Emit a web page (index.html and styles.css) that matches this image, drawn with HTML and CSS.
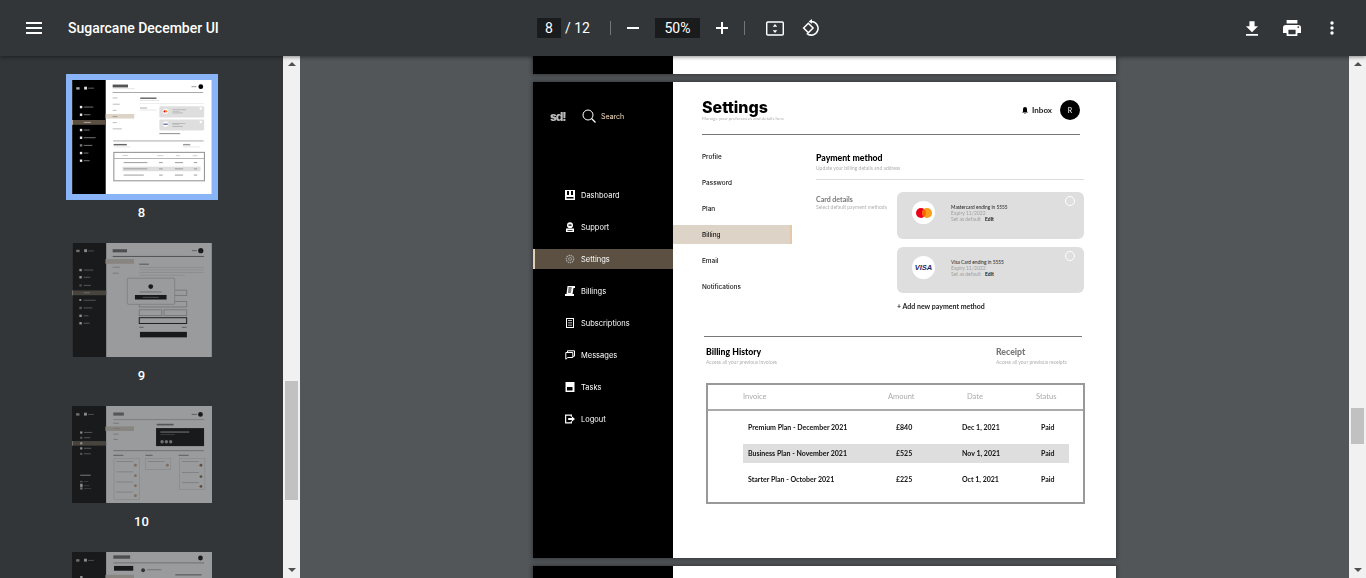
FILE: index.html
```html
<!DOCTYPE html>
<html lang="en-gb">
  <head>
    <title>Sugarcane December UI</title>
    <meta name="viewport" content="width=device-width, initial-scale=1">
    <link rel="stylesheet" href="styles.css">
  </head>
  <body>
    <header class="toolbar">
      <div class="toolbar-left">
        <svg class="menu-icon" width="16" height="12" viewBox="0 0 16 12"><path fill="#fff" d="M0 0h16v2H0zM0 5h16v2H0zM0 10h16v2H0z"/></svg>
        <span class="doc-title">Sugarcane December UI</span>
      </div>
      <div class="toolbar-mid">
        <span class="num-box page-box">8</span>
        <span class="page-total">/ 12</span>
        <span class="divider first"></span>
        <svg class="zoom-out" width="12" height="2" viewBox="0 0 12 2"><path fill="#fff" d="M0 0h12v2H0z"/></svg>
        <span class="num-box zoom-box">50%</span>
        <svg class="zoom-in" width="12" height="12" viewBox="0 0 12 12"><path fill="#fff" d="M5 0h2v5h5v2H7v5H5V7H0V5h5z"/></svg>
        <span class="divider second"></span>
        <svg class="fit-icon" width="18" height="15" viewBox="0 0 20 16"><path fill="#fff" d="M2 0h16a2 2 0 0 1 2 2v12a2 2 0 0 1-2 2H2a2 2 0 0 1-2-2V2a2 2 0 0 1 2-2zm0 1.600a.4.4 0 0 0-.4.4v12c0 .2.2.4.4.4h16c.2 0 .4-.2.4-.4V2a.4.4 0 0 0-.4-.4zM10 3l2.500 3h-5zm0 10l-2.500-3h5z"/></svg>
        <svg class="rotate-icon" width="18" height="18" viewBox="0 0 19 19"><path fill="none" stroke="#fff" stroke-width="1.600" d="M1.700 9.500l5-5 5 5-5 5z"/><path fill="none" stroke="#fff" stroke-width="1.600" d="M8 2.600h2a7.200 7.200 0 1 1-5 12.600"/><path fill="#fff" d="M10.500 0v5L7.200 2.600z"/></svg>
      </div>
      <div class="toolbar-right">
        <svg width="12" height="15" viewBox="0 0 14 17"><path fill="#fff" d="M14 6h-4V0H4v6H0l7 7zM0 15v2h14v-2z"/></svg>
        <svg width="18" height="16" viewBox="0 0 18 16"><path fill="#fff" d="M15.300 5H2.700A2.700 2.700 0 0 0 0 7.700V13h3.600v3h10.800v-3H18V7.700A2.700 2.700 0 0 0 15.300 5zM12.600 14.200H5.400V9.700h7.200zM15.300 8a.9.9 0 1 1 0-1.800.9.9 0 0 1 0 1.800zM14.400 0H3.600v3.600h10.800z"/></svg>
        <svg class="kebab" width="4" height="14" viewBox="0 0 4 14"><circle fill="#fff" cx="2" cy="2" r="1.700"/><circle fill="#fff" cx="2" cy="7" r="1.700"/><circle fill="#fff" cx="2" cy="12" r="1.700"/></svg>
      </div>
    </header>

    <div class="viewer">
      <aside class="thumbs">
        <div class="thumb-list">
          <div class="thumb selected">
            <svg class="thumb-img" width="140" height="114" viewBox="533 82 583 476">
              <rect x="533" y="82" width="583" height="476" fill="#fff"/>
              <rect x="533" y="82" width="140" height="476" fill="#000"/>
              <rect x="550" y="112" width="14" height="10" fill="#aaa"/><rect x="583" y="110" width="12" height="12" fill="#ddd"/><rect x="600" y="114" width="24" height="4" fill="#666"/>
              <g fill="#eee"><rect x="565" y="190" width="10" height="10"/><rect x="565" y="222" width="10" height="10"/><rect x="565" y="286" width="10" height="10"/><rect x="565" y="318" width="10" height="10"/><rect x="565" y="350" width="10" height="10" opacity=".5"/><rect x="565" y="382" width="10" height="10"/><rect x="565" y="414" width="10" height="10"/></g>
              <g fill="#777"><rect x="581" y="193" width="40" height="4"/><rect x="581" y="225" width="28" height="4"/><rect x="581" y="289" width="25" height="4"/><rect x="581" y="321" width="50" height="4"/><rect x="581" y="353" width="36" height="4"/><rect x="581" y="385" width="20" height="4"/><rect x="581" y="417" width="25" height="4"/></g>
              <rect x="533" y="249" width="140" height="20" fill="#5c5042"/><rect x="533" y="249" width="3" height="20" fill="#dfcdb8"/><rect x="581" y="257" width="30" height="4" fill="#aaa"/>
              <rect x="702" y="101" width="64" height="12" fill="#555"/><rect x="702" y="117" width="92" height="3" fill="#ddd"/>
              <rect x="1031" y="108" width="21" height="4" fill="#999"/><circle cx="1070" cy="110" r="10" fill="#000"/>
              <rect x="702" y="133" width="378" height="3" fill="#888"/>
              <g fill="#bbb"><rect x="702" y="155" width="20" height="4"/><rect x="702" y="181" width="30" height="4"/><rect x="702" y="207" width="16" height="4"/><rect x="702" y="258" width="18" height="4"/><rect x="702" y="284" width="38" height="4"/></g>
              <rect x="673" y="224" width="119" height="19" fill="#ded3c7"/><rect x="702" y="233" width="20" height="4" fill="#999"/>
              <rect x="817" y="155" width="68" height="6" fill="#666"/><rect x="817" y="166" width="80" height="3" fill="#ddd"/><rect x="816" y="178" width="268" height="2" fill="#ddd"/>
              <rect x="816" y="197" width="30" height="4" fill="#aaa"/><rect x="816" y="206" width="70" height="3" fill="#ddd"/>
              <rect x="897" y="192" width="187" height="47" rx="6" fill="#dedede"/><rect x="897" y="247" width="187" height="46" rx="6" fill="#dedede"/>
              <circle cx="923" cy="213" r="11" fill="#fff"/><circle cx="920" cy="213" r="5" fill="#eb001b"/><circle cx="926" cy="213" r="5" fill="#f79e1b"/>
              <circle cx="923" cy="266" r="11" fill="#fff"/><rect x="914" y="264" width="18" height="5" fill="#4a5a9c"/>
              <g fill="#aaa"><rect x="951" y="205" width="58" height="3"/><rect x="951" y="212" width="30" height="2"/><rect x="951" y="218" width="44" height="3"/><rect x="951" y="262" width="54" height="3"/><rect x="951" y="268" width="30" height="2"/><rect x="951" y="274" width="44" height="3"/></g>
              <circle cx="1070" cy="201" r="5" fill="#fff"/><circle cx="1070" cy="257" r="5" fill="#fff"/>
              <rect x="897" y="304" width="87" height="4" fill="#888"/>
              <rect x="704" y="335" width="378" height="3" fill="#888"/>
              <rect x="706" y="349" width="55" height="6" fill="#666"/><rect x="706" y="360" width="70" height="3" fill="#ddd"/><rect x="996" y="349" width="30" height="6" fill="#999"/><rect x="996" y="360" width="70" height="3" fill="#ddd"/>
              <rect x="707" y="384" width="378" height="119" fill="none" stroke="#888" stroke-width="4"/><rect x="707" y="408" width="378" height="3" fill="#999"/>
              <g fill="#ccc"><rect x="743" y="395" width="24" height="4"/><rect x="888" y="396" width="26" height="4"/><rect x="967" y="396" width="16" height="4"/><rect x="1036" y="396" width="20" height="4"/></g>
              <rect x="743" y="444" width="326" height="19" fill="#dedede"/>
              <g fill="#999"><rect x="748" y="425" width="99" height="4"/><rect x="896" y="425" width="15" height="4"/><rect x="962" y="425" width="34" height="4"/><rect x="1041" y="425" width="14" height="4"/><rect x="748" y="451" width="99" height="4"/><rect x="896" y="451" width="15" height="4"/><rect x="962" y="451" width="34" height="4"/><rect x="1041" y="451" width="14" height="4"/><rect x="748" y="477" width="84" height="4"/><rect x="896" y="477" width="15" height="4"/><rect x="962" y="477" width="34" height="4"/><rect x="1041" y="477" width="14" height="4"/></g>
            </svg>
          </div>
          <span class="thumb-num num-8">8</span>

          <div class="thumb dim">
            <svg class="thumb-img" width="140" height="114" viewBox="0 0 583 476">
              <rect width="583" height="476" fill="#fff"/>
              <rect width="142" height="476" fill="#000"/>
              <rect x="17" y="28" width="14" height="10" fill="#aaa"/><rect x="50" y="26" width="12" height="12" fill="#ddd"/><rect x="67" y="31" width="24" height="4" fill="#666"/>
              <g fill="#eee"><rect x="30" y="108" width="10" height="10"/><rect x="30" y="138" width="10" height="10"/><rect x="30" y="172" width="10" height="10" opacity=".4"/><rect x="30" y="234" width="8" height="8"/><rect x="30" y="266" width="10" height="10" opacity=".5"/><rect x="30" y="299" width="10" height="10"/><rect x="30" y="330" width="10" height="10"/></g>
              <g fill="#777"><rect x="48" y="111" width="40" height="4"/><rect x="48" y="141" width="28" height="4"/><rect x="48" y="175" width="30" height="4"/><rect x="48" y="237" width="50" height="4"/><rect x="48" y="269" width="36" height="4"/><rect x="48" y="302" width="20" height="4"/><rect x="48" y="333" width="25" height="4"/></g>
              <rect y="198" width="142" height="20" fill="#5c5042"/><rect y="198" width="3" height="20" fill="#dfcdb8"/><rect x="48" y="206" width="26" height="4" fill="#aaa"/>
              <rect x="169" y="26" width="60" height="13" fill="#666"/><rect x="500" y="30" width="20" height="4" fill="#888"/><circle cx="537" cy="32" r="11" fill="#000"/>
              <rect x="169" y="54" width="381" height="4" fill="#666"/>
              <rect x="139" y="67" width="119" height="20" fill="#ded3c7"/>
              <rect x="169" y="99" width="30" height="4" fill="#bbb"/><rect x="169" y="124" width="25" height="4" fill="#bbb"/>
              <rect x="280" y="86" width="40" height="5" fill="#888"/>
              <g fill="#ddd"><rect x="280" y="100" width="270" height="3"/><rect x="280" y="111" width="270" height="3"/><rect x="280" y="122" width="270" height="3"/><rect x="280" y="133" width="190" height="3"/></g>
              <g fill="none" stroke="#bbb" stroke-width="4"><rect x="280" y="197" width="198" height="22"/><rect x="280" y="244" width="198" height="23"/><rect x="280" y="279" width="94" height="24"/><rect x="383" y="279" width="95" height="24"/></g>
              <rect x="280" y="312" width="198" height="24" fill="none" stroke="#000" stroke-width="4"/>
              <rect x="280" y="350" width="18" height="4" fill="#888"/><rect x="458" y="350" width="20" height="4" fill="#888"/>
              <rect x="283" y="371" width="196" height="23" fill="#000"/>
              <rect x="230" y="147" width="198" height="109" rx="3" fill="#fff" stroke="#bbb" stroke-width="3"/>
              <circle cx="328" cy="182" r="10" fill="#000"/><rect x="282" y="203" width="92" height="3" fill="#888"/>
              <rect x="262" y="217" width="132" height="19" fill="#000"/><rect x="295" y="225" width="66" height="3" fill="#888"/>
            </svg>
          </div>
          <span class="thumb-num num-9">9</span>

          <div class="thumb dim">
            <svg class="thumb-img" width="140" height="97" viewBox="0 0 583 404">
              <rect width="583" height="404" fill="#fff"/>
              <rect width="142" height="404" fill="#000"/>
              <rect x="17" y="30" width="14" height="10" fill="#aaa"/><rect x="50" y="28" width="12" height="12" fill="#ddd"/><rect x="67" y="33" width="24" height="4" fill="#666"/>
              <g fill="#eee"><rect x="34" y="106" width="9" height="9"/><rect x="34" y="128" width="9" height="9" opacity=".5"/><rect x="34" y="172" width="9" height="9"/><rect x="34" y="195" width="9" height="9" opacity=".5"/></g>
              <g fill="#777"><rect x="50" y="108" width="34" height="4"/><rect x="50" y="130" width="26" height="4"/><rect x="50" y="174" width="30" height="4"/><rect x="50" y="197" width="28" height="4"/></g>
              <rect y="146" width="142" height="19" fill="#5c5042"/><rect y="146" width="3" height="19" fill="#dfcdb8"/><rect x="34" y="151" width="9" height="9" fill="#eee"/>
              <rect x="34" y="286" width="44" height="5" fill="#999"/>
              <rect x="34" y="312" width="10" height="6" fill="#777"/><rect x="34" y="324" width="10" height="13" fill="#eee"/><rect x="34" y="339" width="10" height="9" fill="#aaa"/>
              <g fill="#555"><rect x="50" y="313" width="18" height="3"/><rect x="50" y="329" width="22" height="3"/><rect x="50" y="342" width="30" height="3"/></g>
              <rect x="172" y="27" width="44" height="13" fill="#777"/><rect x="498" y="33" width="22" height="4" fill="#888"/><circle cx="535" cy="35" r="10" fill="#000"/>
              <rect x="172" y="54" width="378" height="5" fill="#ccc"/>
              <rect x="139" y="85" width="119" height="19" fill="#ded3c7"/>
              <g fill="#bbb"><rect x="172" y="70" width="24" height="4"/><rect x="172" y="92" width="28" height="4"/><rect x="172" y="115" width="22" height="4"/><rect x="172" y="137" width="18" height="4"/></g>
              <rect x="353" y="74" width="70" height="7" fill="#777"/>
              <rect x="350" y="92" width="200" height="75" fill="#000"/>
              <rect x="368" y="106" width="120" height="5" fill="#999"/><rect x="368" y="118" width="60" height="3" fill="#555"/>
              <circle cx="375" cy="149" r="7" fill="#aaa"/><circle cx="393" cy="149" r="7" fill="#aaa"/><circle cx="411" cy="149" r="7" fill="#aaa"/>
              <rect x="172" y="185" width="378" height="3" fill="#888"/>
              <rect x="172" y="203" width="42" height="5" fill="#999"/><rect x="306" y="203" width="30" height="5" fill="#999"/><rect x="444" y="203" width="42" height="5" fill="#999"/>
              <g fill="#fff" stroke="#ddd" stroke-width="3"><rect x="175" y="218" width="105" height="171"/><rect x="306" y="218" width="105" height="46"/><rect x="448" y="218" width="105" height="129"/></g>
              <g fill="#c9a98a"><circle cx="264" cy="247" r="6"/><circle cx="264" cy="290" r="6"/><circle cx="264" cy="332" r="6"/><circle cx="264" cy="374" r="6"/><circle cx="397" cy="247" r="6"/></g>
              <g fill="#8a6a4a"><circle cx="537" cy="247" r="6"/><circle cx="537" cy="294" r="6"/><circle cx="537" cy="335" r="6"/></g>
              <g fill="#bbb"><rect x="185" y="230" width="70" height="3"/><rect x="185" y="273" width="70" height="3"/><rect x="185" y="315" width="70" height="3"/><rect x="185" y="357" width="70" height="3"/><rect x="316" y="230" width="70" height="3"/><rect x="458" y="230" width="70" height="3"/><rect x="458" y="275" width="70" height="3"/><rect x="458" y="318" width="70" height="3"/></g>
            </svg>
          </div>
          <span class="thumb-num num-10">10</span>

          <div class="thumb dim">
            <svg class="thumb-img" width="140" height="97" viewBox="0 0 583 404">
              <rect width="583" height="404" fill="#fff"/>
              <rect width="142" height="404" fill="#000"/>
              <rect x="17" y="30" width="14" height="10" fill="#aaa"/><rect x="50" y="28" width="12" height="12" fill="#ddd"/><rect x="67" y="33" width="24" height="4" fill="#666"/>
              <rect x="34" y="100" width="10" height="10" fill="#eee"/>
              <rect x="172" y="14" width="70" height="14" fill="#666"/><circle cx="535" cy="25" r="10" fill="#000"/>
              <rect x="172" y="44" width="378" height="3" fill="#888"/>
              <rect x="175" y="58" width="80" height="20" fill="#000"/>
              <rect x="139" y="95" width="119" height="16" fill="#ded3c7"/>
              <circle cx="296" cy="76" r="8" fill="#333"/><rect x="312" y="72" width="60" height="4" fill="#aaa"/>
              <rect x="430" y="92" width="110" height="6" fill="#999"/>
            </svg>
          </div>
        </div>
        <div class="scrollbar">
          <span class="arrow up"></span>
          <span class="scroll-thumb left-thumb"></span>
          <span class="arrow down"></span>
        </div>
      </aside>

      <main class="document">
        <div class="pages">
          <section class="pdf-page prev-page">
            <div class="side-strip"></div>
          </section>

          <section class="pdf-page current-page">
            <nav class="side">
              <div class="brand">
                <span class="logo">sd!</span>
                <svg class="search-icon" width="14" height="14" viewBox="0 0 14 14"><circle cx="6" cy="6" r="5" fill="none" stroke="#fff"/><path stroke="#fff" stroke-width="1.200" d="M9.500 9.500l4 4"/></svg>
                <span class="search-text">Search</span>
              </div>
              <ul class="nav">
                <li class="nav-item">
                  <svg width="10" height="10" viewBox="0 0 10 10"><path fill="#fff" d="M0 0h10v10H0z"/><path fill="#000" d="M2 1h2v4H2zM6 1h2v4H6zM1.500 7h7v1.500h-7z"/></svg>
                  Dashboard
                </li>
                <li class="nav-item">
                  <svg width="10" height="10" viewBox="0 0 10 10"><circle cx="5" cy="3.200" r="3" fill="#fff"/><path fill="#fff" d="M1 6.500h8V10H1z"/><path fill="#000" d="M3.500 2.500h3v1.200h-3zM2.500 8h5v.8h-5z"/></svg>
                  Support
                </li>
                <li class="nav-item active">
                  <svg width="10" height="10" viewBox="0 0 10 10"><circle cx="5" cy="5" r="3.700" fill="none" stroke="#aaa" stroke-width="1.200" stroke-dasharray="1.500 .7"/><circle cx="5" cy="5" r="1.500" fill="none" stroke="#aaa" stroke-width=".8"/></svg>
                  Settings
                </li>
                <li class="nav-item">
                  <svg width="10" height="10" viewBox="0 0 10 10"><path fill="#fff" d="M2.500 0H10v2H8.500l-1 6H9v2H0V8h1.500z"/><path fill="#000" d="M3.500 1.500h3.200v1H3.500zM3.200 3.500h3.200v1H3.200zM3 5.500h3v1H3z"/></svg>
                  Billings
                </li>
                <li class="nav-item">
                  <svg width="10" height="10" viewBox="0 0 10 10"><path fill="#fff" d="M1 0h8v10H1z"/><path fill="#000" d="M2 1h6v8H2z"/><path fill="#fff" d="M3 2.200h4V3H3zM3 4.500h4v.8H3zM3 6.800h4v.8H3z"/></svg>
                  Subscriptions
                </li>
                <li class="nav-item">
                  <svg width="10" height="10" viewBox="0 0 10 10"><path fill="none" stroke="#fff" d="M2.500 2V.8h7v5.400H8"/><path fill="none" stroke="#fff" d="M.8 2.500h7v5h-5L.8 9.200z"/></svg>
                  Messages
                </li>
                <li class="nav-item">
                  <svg width="10" height="10" viewBox="0 0 10 10"><path fill="#fff" d="M.5 0h9v10h-9z"/><path fill="#000" d="M2 5h5.500v3.500H2z"/></svg>
                  Tasks
                </li>
                <li class="nav-item">
                  <svg width="10" height="10" viewBox="0 0 11 10"><path fill="none" stroke="#fff" stroke-width="1.300" d="M7 2.500V.7H.7v8.600H7V7.500"/><path fill="#fff" d="M3.500 4h4V2l3.500 3-3.500 3V6h-4z"/></svg>
                  Logout
                </li>
              </ul>
            </nav>

            <div class="content">
              <div class="head">
                <div>
                  <h1 class="title">Settings</h1>
                  <p class="hint">Manage your preferences and details here</p>
                </div>
                <div class="inbox">
                  <svg width="6" height="7" viewBox="0 0 6 7"><path fill="#000" d="M3 0a2 2 0 0 1 2 2v2.500l1 1H0l1-1V2a2 2 0 0 1 2-2zM2.200 6h1.600L3 7z"/></svg>
                  <span class="inbox-text">Inbox</span>
                  <span class="avatar">R</span>
                </div>
              </div>

              <div class="settings-body">
                <ul class="tabs">
                  <li class="tab">Profile</li>
                  <li class="tab">Password</li>
                  <li class="tab">Plan</li>
                  <li class="tab active">Billing</li>
                  <li class="tab">Email</li>
                  <li class="tab">Notifications</li>
                </ul>

                <div class="payment">
                  <div class="payment-head">
                    <h2 class="section-title">Payment method</h2>
                    <p class="hint wide">Update your billing details and address</p>
                  </div>
                  <div class="card-grid">
                    <div>
                      <h3 class="card-label">Card details</h3>
                      <p class="hint wide">Select default payment methods</p>
                    </div>
                    <div class="card-list">
                      <div class="card">
                        <span class="card-logo">
                          <svg width="16" height="10" viewBox="0 0 16 10"><circle cx="5" cy="5" r="5" fill="#eb001b"/><circle cx="11" cy="5" r="5" fill="#f79e1b"/><path fill="#ff5f00" d="M8 1.100a5 5 0 0 1 0 7.800 5 5 0 0 1 0-7.800z"/></svg>
                        </span>
                        <div class="card-info">
                          <p class="card-name">Mastercard ending in 5555</p>
                          <p class="card-sub">Expiry 11/2022</p>
                          <p class="card-sub">Set as default <b class="edit">Edit</b></p>
                        </div>
                        <span class="radio"></span>
                      </div>
                      <div class="card">
                        <span class="card-logo"><span class="visa">VISA</span></span>
                        <div class="card-info">
                          <p class="card-name">Visa Card ending in 5555</p>
                          <p class="card-sub">Expiry 11/2022</p>
                          <p class="card-sub">Set as default <b class="edit">Edit</b></p>
                        </div>
                        <span class="radio"></span>
                      </div>
                    </div>
                  </div>
                  <p class="add-card">+ Add new payment method</p>
                </div>
              </div>

              <div class="history">
                <div class="history-head">
                  <div>
                    <h2 class="section-title">Billing History</h2>
                    <p class="hint wide">Access all your previous invoices</p>
                  </div>
                  <div class="receipt">
                    <h2 class="section-title muted">Receipt</h2>
                    <p class="hint wide">Access all your previous receipts</p>
                  </div>
                </div>

                <div class="bill-table">
                  <div class="bill-head">
                    <span>Invoice</span>
                    <span>Amount</span>
                    <span>Date</span>
                    <span>Status</span>
                  </div>
                  <div class="bill-rows">
                    <div class="bill-row">
                      <span>Premium Plan - December 2021</span><span>£840</span><span>Dec 1, 2021</span><span>Paid</span>
                    </div>
                    <div class="bill-row shaded">
                      <span>Business Plan - November 2021</span><span>£525</span><span>Nov 1, 2021</span><span>Paid</span>
                    </div>
                    <div class="bill-row">
                      <span>Starter Plan - October 2021</span><span>£225</span><span>Oct 1, 2021</span><span>Paid</span>
                    </div>
                  </div>
                </div>
              </div>
            </div>
          </section>

          <section class="pdf-page next-page">
            <div class="side-strip"></div>
          </section>
        </div>
        <div class="scrollbar">
          <span class="arrow up"></span>
          <span class="scroll-thumb right-thumb"></span>
          <span class="arrow down"></span>
        </div>
      </main>
    </div>
  </body>
</html>
```

FILE: styles.css
```css
* {
  box-sizing: border-box;
}
html, body {
  margin: 0;
  height: 578px;
  overflow: hidden;
}
body {
  background-color: #525659;
  font-family: "Roboto", sans-serif;
}
h1, h2, h3, p, ul {
  margin: 0;
  padding: 0;
}
ul {
  list-style: none;
}

/* top toolbar */
.toolbar {
  position: relative;
  z-index: 2;
  display: flex;
  align-items: center;
  height: 56px;
  background-color: #323639;
  color: #fff;
  box-shadow: 0 1px 4px rgba(0, 0, 0, 0.45);
}
.toolbar-left {
  display: flex;
  align-items: center;
  width: 537px;
  padding-left: 26px;
}
.doc-title {
  margin-left: 26px;
  font-size: 14px;
  font-weight: 500;
}
.toolbar-mid {
  display: flex;
  align-items: center;
  width: 500px;
}
.num-box {
  height: 20px;
  background-color: #191b1c;
  font-size: 14px;
  line-height: 20px;
  text-align: center;
}
.page-box {
  width: 24px;
}
.zoom-box {
  width: 45px;
  margin-left: 16px;
}
.page-total {
  margin-left: 4px;
  font-size: 14px;
}
.divider {
  width: 1px;
  height: 14px;
  background-color: #72767a;
}
.divider.first {
  margin-left: 20px;
}
.zoom-out {
  margin-left: 16px;
}
.zoom-in {
  margin-left: 16px;
}
.divider.second {
  margin-left: 16px;
}
.fit-icon {
  margin-left: 21px;
}
.rotate-icon {
  margin-left: 18px;
}
.toolbar-right {
  display: flex;
  align-items: center;
  gap: 25px;
  margin-left: 209px;
}
.kebab {
  margin-left: 4px;
}

/* layout under the toolbar */
.viewer {
  display: flex;
  height: 522px;
}
.thumbs {
  display: flex;
  width: 300px;
  background-color: #323639;
}
.thumb-list {
  flex: 1;
  display: flex;
  flex-direction: column;
  align-items: center;
  overflow: hidden;
  padding-top: 18px;
}
.thumb {
  flex: none;
  line-height: 0;
}
.thumb.selected {
  border: 6px solid #8ab4f8;
}
.thumb.dim {
  opacity: 0.5;
}
.thumb-num {
  flex: none;
  color: #fff;
  font-size: 13px;
  font-weight: 500;
  line-height: 16px;
}
.num-8 {
  margin: 5px 0 22px;
}
.num-9 {
  margin: 11px 0 22px;
}
.num-10 {
  margin: 11px 0 22px;
}
.thumb-img {
  display: block;
  filter: blur(0.4px);
}

.scrollbar {
  flex: none;
  display: flex;
  flex-direction: column;
  align-items: center;
  width: 17px;
  background-color: #f1f1f1;
}
.scroll-thumb {
  width: 13px;
  background-color: #c1c1c1;
}
.left-thumb {
  height: 119px;
  margin-top: 315px;
}
.right-thumb {
  height: 36px;
  margin-top: 342px;
}
.arrow {
  width: 0;
  height: 0;
  border-left: 4px solid transparent;
  border-right: 4px solid transparent;
}
.arrow.up {
  margin-top: 6px;
  border-bottom: 4px solid #505050;
}
.arrow.down {
  margin-top: auto;
  margin-bottom: 6px;
  border-top: 4px solid #505050;
}

.document {
  flex: 1;
  display: flex;
  background-color: #525659;
}
.pages {
  flex: 1;
  display: flex;
  flex-direction: column;
  align-items: center;
  gap: 8px;
  overflow: hidden;
}

/* pdf pages */
.pdf-page {
  flex: none;
  width: 583px;
  background-color: #fff;
  color: #222;
  font-family: "Lato", sans-serif;
  box-shadow: 0 0 4px 1px rgba(0, 0, 0, 0.35);
}
.prev-page {
  height: 18px;
}
.next-page {
  height: 60px;
}
.side-strip {
  width: 140px;
  height: 100%;
  background-color: #000;
}
.current-page {
  display: grid;
  grid-template-columns: 140px 1fr;
  height: 476px;
}

/* the reference page is a scaled raster, so its text is a little soft */
.side, .content {
  filter: blur(0.25px);
}

/* page sidebar */
.side {
  padding-top: 24px;
  background-color: #000;
  color: #fff;
  font-family: "Inter", sans-serif;
}
.brand {
  display: flex;
  align-items: center;
  height: 20px;
  padding-left: 17px;
}
.logo {
  width: 32px;
  color: #bbb;
  font-size: 12px;
  font-weight: 800;
  letter-spacing: -1.200px;
}
.search-text {
  margin-left: 5px;
  color: #f3dcc0;
  font-size: 7px;
}
.nav {
  display: flex;
  flex-direction: column;
  gap: 12px;
  margin-top: 59px;
}
.nav-item {
  display: flex;
  align-items: center;
  gap: 6px;
  height: 20px;
  padding-left: 32px;
  font-size: 7.500px;
}
.nav-item.active {
  padding-left: 30px;
  border-left: 2px solid #e4cfb6;
  background-color: #5c5042;
}

/* page content */
.content {
  min-width: 0;
}
.head {
  display: flex;
  justify-content: space-between;
  align-items: flex-start;
  margin: 0 36px 0 29px;
  padding: 16px 0 13px;
  border-bottom: 1px solid #777;
}
.title {
  color: #000;
  font-family: "Inter", sans-serif;
  font-size: 16px;
  font-weight: 800;
  line-height: 18px;
}
.hint {
  color: #b0b0b0;
  font-size: 4.500px;
  line-height: 5px;
}
.hint.wide {
  font-size: 5px;
  line-height: 6px;
}
.inbox {
  display: flex;
  align-items: center;
  gap: 4px;
  margin-top: 2px;
}
.inbox-text {
  margin-right: 4px;
  font-size: 8px;
  font-weight: 700;
}
.avatar {
  display: flex;
  align-items: center;
  justify-content: center;
  width: 20px;
  height: 20px;
  border-radius: 50%;
  background-color: #000;
  color: #fff;
  font-size: 7px;
}

.settings-body {
  display: grid;
  grid-template-columns: 119px 1fr;
}
.tabs {
  display: flex;
  flex-direction: column;
  gap: 7px;
  margin-top: 12px;
}
.tab {
  height: 19px;
  padding-left: 29px;
  color: #111;
  font-family: "Inter", sans-serif;
  font-size: 6.400px;
  font-weight: 500;
  line-height: 21px;
}
.tab.active {
  border-right: 2px solid #e4c9a8;
  background-color: #ded3c7;
}
.payment {
  margin: 18px 32px 0 24px;
}
.payment-head {
  padding-bottom: 8px;
  border-bottom: 1px solid #ddd;
}
.section-title {
  color: #000;
  font-size: 8.700px;
  font-weight: 900;
  line-height: 10px;
}
.section-title.muted {
  color: #777;
}
.section-title + .hint {
  margin-top: 2px;
}
.card-grid {
  display: grid;
  grid-template-columns: 81px 187px;
  margin-top: 12px;
}
.card-label {
  margin-top: 3px;
  color: #777;
  font-size: 7px;
  font-weight: 700;
  line-height: 9px;
}
.card-list {
  display: flex;
  flex-direction: column;
  gap: 8px;
}
.card {
  position: relative;
  display: flex;
  align-items: center;
  height: 46.500px;
  padding-left: 15px;
  border-radius: 6px;
  background-color: #dedede;
}
.card-logo {
  display: flex;
  align-items: center;
  justify-content: center;
  width: 23px;
  height: 23px;
  margin-top: -5px;
  border-radius: 50%;
  background-color: #fff;
}
.visa {
  color: #1a2a6c;
  font-family: "Liberation Sans", sans-serif;
  font-size: 7.500px;
  font-style: italic;
  font-weight: 700;
}
.card-info {
  margin: -4px 0 0 16px;
}
.card-name {
  color: #222;
  font-size: 4.800px;
  line-height: 6px;
}
.card-sub {
  color: #a0a0a0;
  font-size: 5px;
  line-height: 6px;
}
.edit {
  margin-left: 3px;
  color: #111;
}
.radio {
  position: absolute;
  top: 4px;
  right: 9px;
  width: 10px;
  height: 10px;
  border: 1px solid #fff;
  border-radius: 50%;
}
.add-card {
  margin: 8px 0 0 81px;
  color: #222;
  font-size: 7px;
  font-weight: 700;
  line-height: 10px;
}

.history {
  margin: 25px 31px 0 31px;
}
.history-head {
  display: grid;
  grid-template-columns: 290px 1fr;
  margin-right: 3px;
  padding: 10px 0 0 2px;
  border-top: 1px solid #777;
}
.bill-table {
  width: 379px;
  margin: 18px 0 0 2px;
  border: 2px solid #999;
  padding-bottom: 13px;
}
.bill-head {
  display: grid;
  grid-template-columns: 145px 79px 69px 1fr;
  height: 26px;
  padding-left: 35px;
  border-bottom: 2px solid #aaa;
  color: #aaa;
  font-size: 7.500px;
  line-height: 24px;
}
.bill-rows {
  display: flex;
  flex-direction: column;
  gap: 7px;
  margin: 7px 14px 0 35px;
}
.bill-row {
  display: grid;
  grid-template-columns: 153px 66px 79px 1fr;
  height: 19px;
  color: #111;
  font-size: 7px;
  font-weight: 700;
  line-height: 19px;
}
.bill-row span:first-child {
  padding-left: 5px;
}
.bill-row.shaded {
  background-color: #dedede;
}
```
